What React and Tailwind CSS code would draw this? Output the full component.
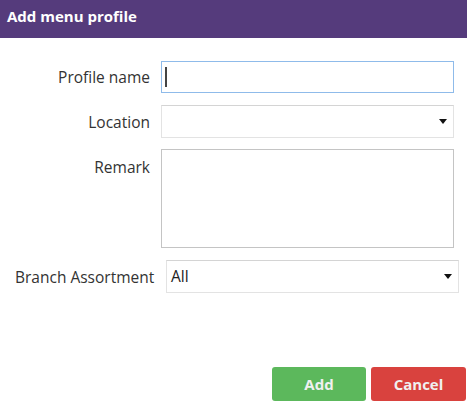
const font = { fontFamily: '"Open Sans", "Noto Sans", sans-serif' }

function Caret() {
  return (
    <svg width="8" height="5" viewBox="0 0 8 5" className="shrink-0">
      <path d="M0 0 H8 L4 5 Z" fill="#111" />
    </svg>
  )
}

function Label({ children, top }) {
  return (
    <div
      className={`w-[150px] shrink-0 text-right text-[15.5px] text-[#333] ${top ? 'pt-[7px]' : 'pt-[2px]'}`}
    >
      {children}
    </div>
  )
}

export default function App() {
  return (
    <div className="w-[467px] h-[413px] bg-white flex flex-col" style={font}>
      <div className="h-[38px] bg-[#553b7c] pl-[7px] pt-[4px] shrink-0">
        <span className="text-white font-bold text-[15px]">Add menu profile</span>
      </div>

      <div className="flex flex-col pt-[23px]">
        <div className="flex items-center gap-[11px] h-[32px]">
          <Label>Profile name</Label>
          <div className="w-[293px] h-[32px] border border-[#8fbbea] flex items-center pl-[3px]">
            <span className="w-[2px] h-[20px] bg-[#444]" />
          </div>
        </div>

        <div className="flex items-center gap-[11px] h-[33px] mt-[12px]">
          <Label>Location</Label>
          <div className="w-[293px] h-[33px] border border-[#e3e3e3] border-t-[#d4d4d4] flex items-center justify-end pr-[6px]">
            <Caret />
          </div>
        </div>

        <div className="flex items-start gap-[11px] mt-[11px]">
          <Label top>Remark</Label>
          <div className="w-[293px] h-[99px] border border-[#c4c4c4]" />
        </div>

        <div className="flex items-center h-[33px] mt-[12px]">
          <div className="pl-[15px] pt-[2px] w-[166px] shrink-0 text-[15.5px] text-[#333] whitespace-nowrap">
            Branch Assortment
          </div>
          <div className="w-[293px] h-[33px] border border-[#e3e3e3] border-t-[#d4d4d4] flex items-center justify-between pl-[4px] pr-[6px]">
            <span className="text-[15.5px] text-[#222]">All</span>
            <Caret />
          </div>
        </div>
      </div>

      <div className="flex justify-end gap-[5px] pr-[1px] mt-[74px]">
        <button className="w-[94px] h-[34px] rounded-[3px] bg-[#5cb85c] text-[#f0f0f0] font-bold text-[15px]">
          Add
        </button>
        <button className="w-[95px] h-[34px] rounded-[3px] bg-[#d9423e] text-[#f0f0f0] font-bold text-[15px]">
          Cancel
        </button>
      </div>
    </div>
  )
}
